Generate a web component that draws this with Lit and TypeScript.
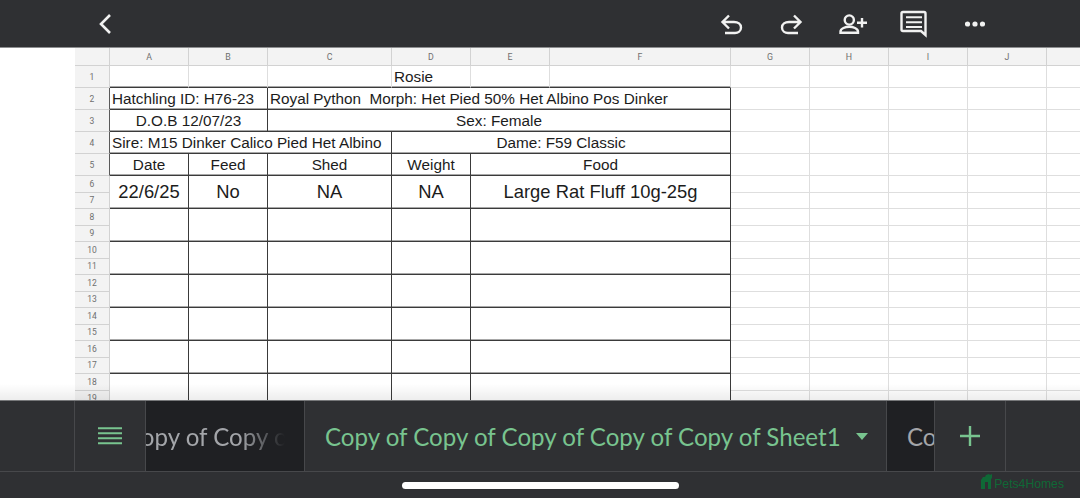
import { LitElement, html, css, svg } from "lit";
import { customElement } from "lit/decorators.js";

const COLS = ["A", "B", "C", "D", "E", "F", "G", "H", "I", "J", ""];

type Cell = { c: number; cs?: number; t?: string; cls?: string };

const bordered = (r: number, rs: number, cells: Cell[]) => ({ r, rs, cells });

const ROWS = [
  bordered(1, 1, [
    { c: 1, cls: "bb" },
    { c: 2, cls: "bb" },
    { c: 3, cls: "bb" },
    { c: 4, t: "Rosie", cls: "bb left" },
    { c: 5, cls: "bb" },
    { c: 6, cls: "bb" },
  ]),
  bordered(2, 1, [
    { c: 1, cs: 2, t: "Hatchling ID: H76-23", cls: "bb br left" },
    { c: 3, cs: 4, t: "Royal Python  Morph: Het Pied 50% Het Albino Pos Dinker", cls: "bb br left" },
  ]),
  bordered(3, 1, [
    { c: 1, cs: 2, t: "D.O.B 12/07/23", cls: "bb br" },
    { c: 3, cs: 4, t: "Sex: Female", cls: "bb br" },
  ]),
  bordered(4, 1, [
    { c: 1, cs: 3, t: "Sire: M15 Dinker Calico Pied Het Albino", cls: "bb br left" },
    { c: 4, cs: 3, t: "Dame: F59 Classic", cls: "bb br" },
  ]),
  bordered(5, 1, [
    { c: 1, t: "Date", cls: "bb br" },
    { c: 2, t: "Feed", cls: "bb br" },
    { c: 3, t: "Shed", cls: "bb br" },
    { c: 4, t: "Weight", cls: "bb br" },
    { c: 5, cs: 2, t: "Food", cls: "bb br" },
  ]),
  bordered(6, 2, [
    { c: 1, t: "22/6/25", cls: "bb br big" },
    { c: 2, t: "No", cls: "bb br big" },
    { c: 3, t: "NA", cls: "bb br big" },
    { c: 4, t: "NA", cls: "bb br big" },
    { c: 5, cs: 2, t: "Large Rat Fluff 10g-25g", cls: "bb br big" },
  ]),
  ...[8, 10, 12, 14, 16, 18].map((r) =>
    bordered(r, 2, [
      { c: 1, cls: "bb br" },
      { c: 2, cls: "bb br" },
      { c: 3, cls: "bb br" },
      { c: 4, cls: "bb br" },
      { c: 5, cs: 2, cls: "bb br" },
    ])
  ),
];

const LABELS = Array.from({ length: 19 }, (_, i) => i + 1);
const TAB = "Copy of Copy of Copy of Copy of Copy of Sheet1";

@customElement("app-root")
export class AppRoot extends LitElement {
  static styles = css`
    :host {
      display: block;
      width: 1080px;
      height: 498px;
      overflow: hidden;
      background: #fff;
      font-family: "Liberation Sans", Arial, sans-serif;
    }
    .page {
      display: flex;
      flex-direction: column;
      height: 498px;
    }
    .top {
      flex: 0 0 47px;
      background: #2f3033;
      border-bottom: 1px solid #8d8e90;
      display: flex;
      align-items: center;
      color: #f1f1f1;
    }
    .top svg {
      display: block;
      flex: none;
      fill: none;
      stroke: #f1f1f1;
    }
    .back {
      margin-left: 96px;
    }
    .spacer {
      flex: 1;
    }
    .undo { margin-right: 35px; }
    .redo { margin-right: 35px; }
    .person { margin-right: 32px; }
    .comment { margin-right: 37px; }
    .more { margin-right: 95px; }

    .sheetwrap {
      position: relative;
      flex: 1 1 0;
      overflow: hidden;
      padding-left: 75px;
      min-height: 0;
    }
    .shade {
      position: absolute;
      left: 0;
      right: 0;
      bottom: 0;
      height: 16px;
      background: linear-gradient(rgba(0, 0, 0, 0), rgba(0, 0, 0, 0.07));
      pointer-events: none;
    }
    .grid {
      display: grid;
      grid-template-columns: 35px 79px 79px 124px 79px 79px 181px 79px 79px 79px 79px 34px;
      grid-template-rows: 18px repeat(5, 22px) repeat(14, 16.5px);
      color: #1c1c1c;
    }
    .cell {
      box-sizing: border-box;
      border-right: 1px solid #dedede;
      border-bottom: 1px solid #dedede;
      display: flex;
      align-items: center;
      justify-content: center;
      white-space: pre;
      overflow: visible;
      font-size: 15.3px;
      min-width: 0;
      min-height: 0;
      background: #fff;
    }
    .left {
      justify-content: flex-start;
      padding-left: 2px;
    }
    .bb {
      border-bottom: 1px solid #3a3a3a;
      box-shadow: inset 0 -1px 0 #a8a8a8;
    }
    .br {
      border-right: 1px solid #3a3a3a;
    }
    .big {
      font-size: 18.4px;
    }
    .head {
      background: #f3f3f3;
      border-right: 1px solid #d2d2d2;
      border-bottom: 1px solid #d2d2d2;
      color: #6f6f6f;
      font-size: 8.8px;
      font-family: Roboto, "Liberation Sans", sans-serif;
    }
    .head.num {
      font-size: 8.5px;
    }
    .head.edge {
      border-right-color: #5a5a5a;
    }

    .tabs {
      flex: 0 0 70px;
      height: 70px;
      display: flex;
      background: #2f3033;
      border-top: 1px solid #77787a;
      border-bottom: 1px solid #47484b;
      position: relative;
      font-family: Lato, sans-serif;
      font-size: 24.1px;
      white-space: nowrap;
    }
    .slot {
      flex: none;
      box-sizing: border-box;
      display: flex;
      align-items: center;
      justify-content: center;
      border-right: 1px solid #47484b;
    }
    .slot svg {
      display: block;
      flex: none;
    }
    .s0 { width: 75px; }
    .s1 { width: 71px; }
    .s2 {
      width: 159px;
      background: #1f2023;
      justify-content: flex-start;
      overflow: hidden;
      color: #a3a5a9;
    }
    .s2 span {
      margin-left: -21px;
      -webkit-mask-image: linear-gradient(90deg, #000 72%, transparent 100%);
      mask-image: linear-gradient(90deg, #000 72%, transparent 100%);
      width: 160px;
      overflow: hidden;
      flex: none;
    }
    .s3 {
      width: 582px;
      color: #78c48f;
      justify-content: flex-start;
      padding-left: 20px;
      gap: 15px;
    }
    .s4 {
      width: 48px;
      background: #1f2023;
      color: #a3a5a9;
      justify-content: flex-start;
      overflow: hidden;
      padding-left: 20px;
    }
    .s5 { width: 71px; }

    .foot {
      flex: 0 0 26px;
      background: #2f3033;
      position: relative;
      display: flex;
      align-items: center;
      justify-content: center;
    }
    .pill {
      width: 277px;
      height: 7px;
      border-radius: 4px;
      background: #fff;
    }
    .mark {
      position: absolute;
      right: 16px;
      top: 2px;
      display: flex;
      align-items: flex-end;
      gap: 1px;
      color: #0f6836;
      font-size: 12.2px;
      font-family: "Liberation Sans", sans-serif;
      line-height: 16px;
    }
    .mark span {
      margin-bottom: -3px;
    }
    .mark svg {
      display: block;
      fill: #0f6836;
    }
  `;

  private sheet() {
    return html`<div class="grid">
      <div class="cell head"></div>
      ${COLS.map((c) => html`<div class="cell head">${c}</div>`)}
      ${LABELS.map(
        (n) =>
          html`<div
            class="cell head num ${n >= 2 && n <= 5 ? "edge" : ""}"
            style="grid-column:1;grid-row:${n + 1}"
          >${n}</div>`
      )}
      ${LABELS.flatMap((n) =>
        [7, 8, 9, 10, 11].map(
          (c) => html`<div class="cell" style="grid-column:${c + 1};grid-row:${n + 1}"></div>`
        )
      )}
      ${ROWS.flatMap((row) =>
        row.cells.map(
          (cell) =>
            html`<div
              class="cell ${cell.cls ?? ""}"
              style="grid-column:${cell.c + 1} / span ${cell.cs ?? 1};grid-row:${row.r + 1} / span ${row.rs}"
            >${cell.t ?? ""}</div>`
        )
      )}
    </div>`;
  }

  render() {
    return html`<div class="page">
      <div class="top">
        <svg class="back" width="18" height="22" viewBox="0 0 18 22" stroke-width="2.6">
          <path d="M14 2 L5 11 L14 20" />
        </svg>
        <div class="spacer"></div>
        <svg class="undo" width="24" height="24" viewBox="0 0 24 24" stroke-width="2.4">
          <path d="M9 3.5 L2.5 10 L9 16.5 M2.5 10 H14 C18 10 21 12 21 15.5 C21 19 18 21 15 21 H5" />
        </svg>
        <svg class="redo" width="24" height="24" viewBox="0 0 24 24" stroke-width="2.4">
          <path d="M15 3.5 L21.5 10 L15 16.5 M21.5 10 H10 C6 10 3 12 3 15.5 C3 19 6 21 9 21 H19" />
        </svg>
        <svg class="person" width="30" height="24" viewBox="0 0 30 24" stroke-width="2.4">
          <circle cx="11.3" cy="8" r="4.6" />
          <path d="M2.5 20.8 V19.5 C2.5 16.5 7.5 14.8 11.3 14.8 C15 14.8 20 16.5 20 19.5 V20.8 Z" />
          <path d="M24 6 V15.5 M19 10.8 H29" />
        </svg>
        <svg class="comment" width="28" height="28" viewBox="0 0 28 28" stroke-width="2.4">
          <path d="M3 2 H24 A1.5 1.5 0 0 1 25.5 3.5 V25 L21 21 H3 A1.5 1.5 0 0 1 1.5 19.5 V3.5 A1.5 1.5 0 0 1 3 2 Z" />
          <path stroke-width="2" d="M6 7.3 H22 M6 12.3 H22 M6 17 H22" />
        </svg>
        <svg class="more" width="20" height="6" viewBox="0 0 20 6" style="stroke:none;fill:#f1f1f1">
          <circle cx="2.5" cy="3" r="2.6" />
          <circle cx="10" cy="3" r="2.6" />
          <circle cx="17.5" cy="3" r="2.6" />
        </svg>
      </div>
      <div class="sheetwrap">
        ${this.sheet()}
        <div class="shade"></div>
      </div>
      <div class="tabs">
        <div class="slot s0"></div>
        <div class="slot s1">
          <svg width="24" height="20" viewBox="0 0 24 20" fill="none" stroke="#78c48f" stroke-width="2">
            <path d="M0 2.3 H24 M0 7.3 H24 M0 12.3 H24 M0 17.3 H24" />
          </svg>
        </div>
        <div class="slot s2"><span>${TAB}</span></div>
        <div class="slot s3">
          <span>${TAB}</span>
          ${svg`<svg width="12" height="7" viewBox="0 0 12 7" fill="#78c48f"><path d="M0 0 H12 L6 7 Z" /></svg>`}
        </div>
        <div class="slot s4"><span>${TAB}</span></div>
        <div class="slot s5">
          <svg width="22" height="22" viewBox="0 0 22 22" fill="none" stroke="#78c48f" stroke-width="2.4">
            <path d="M11 1 V21 M1 11 H21" />
          </svg>
        </div>
      </div>
      <div class="foot">
        <div class="pill"></div>
        <div class="mark">
          <svg width="13" height="15" viewBox="0 0 13 15">
            <path d="M1 15 V6 L3 3 H5 L6 1 L9 0 L10 1 L12 0 L12 4 L11 5 V15 H8 V8 H5 V15 Z" />
          </svg>
          <span>Pets4Homes</span>
        </div>
      </div>
    </div>`;
  }
}
